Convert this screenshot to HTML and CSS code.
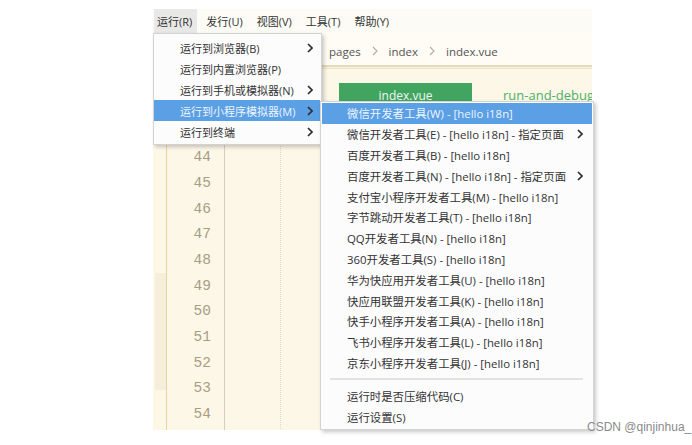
FILE: index.html
```html
<!DOCTYPE html>
<html lang="zh-CN">
<head>
<meta charset="utf-8">
<title>运行菜单</title>
<link rel="stylesheet" href="styles.css">
</head>
<body>
<div class="app">
  <div class="menubar">
    <span class="mb-item active">运行(R)</span>
    <span class="mb-item">发行(U)</span>
    <span class="mb-item">视图(V)</span>
    <span class="mb-item">工具(T)</span>
    <span class="mb-item">帮助(Y)</span>
  </div>
  <div class="editor">
    <div class="crumbs">
      <span>pages</span>
      <svg class="crumb-sep" viewBox="0 0 6 10" width="6" height="10"><polyline points="1,1 5,5 1,9" /></svg>
      <span>index</span>
      <svg class="crumb-sep" viewBox="0 0 6 10" width="6" height="10"><polyline points="1,1 5,5 1,9" /></svg>
      <span>index.vue</span>
    </div>
    <div class="rule"></div>
    <div class="tabs">
      <span class="tab">index.vue</span>
      <span class="tab-link">run-and-debug</span>
    </div>
    <div class="code">
      <div class="stripe"><div class="stripe-mark"></div></div>
      <div class="numbers">
        <div>44</div><div>45</div><div>46</div><div>47</div><div>48</div>
        <div>49</div><div>50</div><div>51</div><div>52</div><div>53</div><div>54</div>
      </div>
      <div class="fold"></div>
      <div class="text"></div>
    </div>
  </div>

  <div class="menu main-menu">
    <div class="mi"><span>运行到浏览器(B)</span><svg class="arr" viewBox="0 0 6 10" width="6" height="10"><polyline points="1,1 5,5 1,9" /></svg></div>
    <div class="mi"><span>运行到内置浏览器(P)</span></div>
    <div class="mi"><span>运行到手机或模拟器(N)</span><svg class="arr" viewBox="0 0 6 10" width="6" height="10"><polyline points="1,1 5,5 1,9" /></svg></div>
    <div class="mi hl"><span>运行到小程序模拟器(M)</span><svg class="arr" viewBox="0 0 6 10" width="6" height="10"><polyline points="1,1 5,5 1,9" /></svg></div>
    <div class="mi"><span>运行到终端</span><svg class="arr" viewBox="0 0 6 10" width="6" height="10"><polyline points="1,1 5,5 1,9" /></svg></div>
  </div>

  <div class="menu sub-menu">
    <div class="si hl"><span>微信开发者工具(W) - [hello i18n]</span></div>
    <div class="si"><span>微信开发者工具(E) - [hello i18n] - 指定页面</span><svg class="arr" viewBox="0 0 6 10" width="6" height="10"><polyline points="1,1 5,5 1,9" /></svg></div>
    <div class="si"><span>百度开发者工具(B) - [hello i18n]</span></div>
    <div class="si"><span>百度开发者工具(N) - [hello i18n] - 指定页面</span><svg class="arr" viewBox="0 0 6 10" width="6" height="10"><polyline points="1,1 5,5 1,9" /></svg></div>
    <div class="si"><span>支付宝小程序开发者工具(M) - [hello i18n]</span></div>
    <div class="si"><span>字节跳动开发者工具(T) - [hello i18n]</span></div>
    <div class="si"><span>QQ开发者工具(N) - [hello i18n]</span></div>
    <div class="si"><span>360开发者工具(S) - [hello i18n]</span></div>
    <div class="si"><span>华为快应用开发者工具(U) - [hello i18n]</span></div>
    <div class="si"><span>快应用联盟开发者工具(K) - [hello i18n]</span></div>
    <div class="si"><span>快手小程序开发者工具(A) - [hello i18n]</span></div>
    <div class="si"><span>飞书小程序开发者工具(L) - [hello i18n]</span></div>
    <div class="si"><span>京东小程序开发者工具(J) - [hello i18n]</span></div>
    <div class="sep"></div>
    <div class="si"><span>运行时是否压缩代码(C)</span></div>
    <div class="si"><span>运行设置(S)</span></div>
  </div>
</div>
<div class="watermark">CSDN @qinjinhua_</div>
</body>
</html>
```

FILE: styles.css
```css
* { box-sizing: border-box; }

html, body {
  margin: 0;
  padding: 0;
  background: #ffffff;
}

body {
  width: 692px;
  height: 445px;
  position: relative;
  overflow: hidden;
  font-family: "Open Sans", "Noto Sans CJK SC", sans-serif;
  font-size: 11px;
  color: #333333;
}

.app {
  position: relative;
  margin: 9px 0 0 153px;
  width: 439px;
  height: 421px;
  background: #fdf7e7;
}

/* ---------- menubar ---------- */
.menubar {
  height: 24px;
  display: flex;
  align-items: stretch;
  background: #fcfbf6;
  padding-left: 1px;
}

.mb-item {
  display: flex;
  align-items: center;
  padding: 0 5px 0 3px;
  margin-right: 6px;
  color: #333333;
  white-space: nowrap;
}

.mb-item.active {
  background: #e8e8e6;
  padding-right: 5px;
}

/* ---------- editor ---------- */
.editor {
  height: 397px;
  overflow: hidden;
}

.crumbs {
  height: 32px;
  display: flex;
  align-items: center;
  padding: 4px 0 0 176px;
  background: #fefcf5;
  font-size: 11.5px;
  color: #555555;
  white-space: nowrap;
}

.crumb-sep {
  margin: 0 11px 0 11px;
  fill: none;
  stroke: #b0aca0;
  stroke-width: 1.1;
}

.rule {
  height: 4px;
  border-top: 2px solid #e5dbbc;
  border-bottom: 1px solid #ece3c8;
  background: #f8f1dc;
}

.tabs {
  height: 50.45px;
  display: flex;
  align-items: flex-start;
  padding: 14px 0 0 186px;
  white-space: nowrap;
}

.tab {
  width: 133px;
  height: 26px;
  background: #41a560;
  color: #eef8ef;
  font-size: 12px;
  text-align: center;
  line-height: 25px;
  flex-shrink: 0;
}

.tab-link {
  margin-left: 31px;
  margin-top: 3px;
  font-size: 13px;
  color: #4caf6a;
  flex-shrink: 0;
}

.code {
  display: flex;
  height: 320px;
}

.stripe {
  width: 14px;
  border-right: 1px solid #e6d49f;
  padding: 153.5px 0 0 2px;
}

.stripe-mark {
  height: 117px;
  background: #f5eedb;
}

.numbers {
  width: 58px;
  border-right: 1px solid #d4cfc2;
  padding: 25.7px 13px 0 0;
  text-align: right;
  font-family: "Liberation Mono", "DejaVu Sans Mono", monospace;
  font-size: 14.5px;
  color: #a79d85;
}

.numbers div {
  height: 25.7px;
  line-height: 25.7px;
}

.fold {
  width: 56px;
  border-right: 1px dotted #d9d6ce;
}

.text {
  flex: 1;
}

/* ---------- menus ---------- */
.menu {
  position: absolute;
  background: #fcfcfc;
  border: 1px solid #d3d3d3;
  box-shadow: 2px 2px 4px rgba(0, 0, 0, 0.22);
  white-space: nowrap;
}

.arr {
  fill: none;
  stroke: #2d2d2d;
  stroke-width: 1.7;
  flex-shrink: 0;
}

.main-menu {
  left: 0;
  top: 24px;
  width: 169px;
  padding: 3px 1px 2px 0;
}

.mi {
  height: 21px;
  display: flex;
  align-items: center;
  justify-content: space-between;
  padding: 0 7px 0 26px;
}

.hl {
  background: #5b9fe4;
  color: #eef5ff;
}

.sub-menu {
  left: 167px;
  top: 92px;
  width: 274px;
  padding: 1px 1px 1.8px 1px;
  z-index: 2;
  font-size: 11.4px;
}

.si {
  height: 20.8px;
  display: flex;
  align-items: center;
  justify-content: space-between;
  padding: 0 9px 0 25px;
}

.sep {
  height: 2px;
  margin: 5px 9px 5.2px 8px;
  background: #e2e2e2;
}

/* ---------- watermark ---------- */
.watermark {
  position: absolute;
  left: 587px;
  top: 420px;
  font-family: "Liberation Sans", Arial, sans-serif;
  font-size: 12px;
  color: #8a8a8a;
  text-shadow: 0 0 1px #ffffff;
  white-space: nowrap;
  z-index: 3;
}
```
